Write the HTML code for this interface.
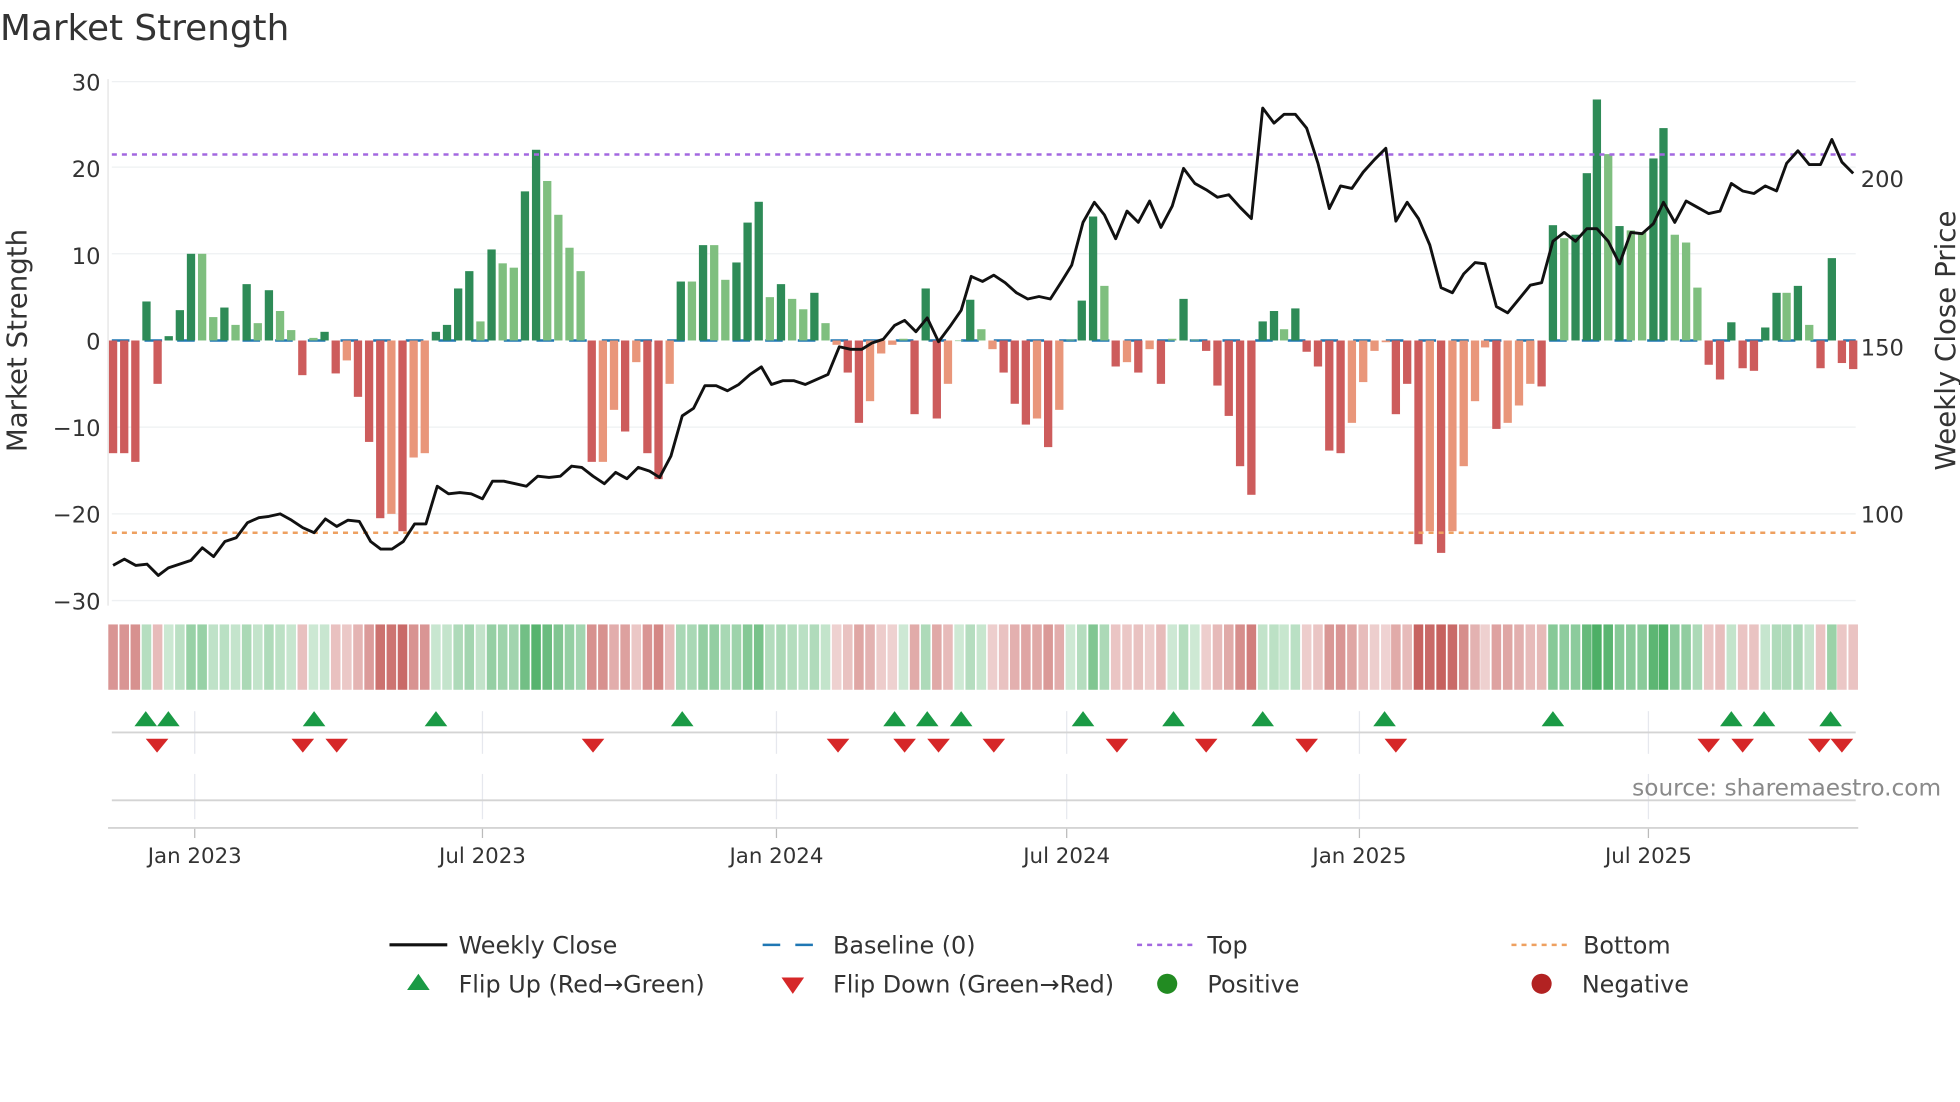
<!DOCTYPE html>
<html><head><meta charset="utf-8"><style>
html,body{margin:0;padding:0;background:#fff;width:1960px;height:1102px;overflow:hidden}
svg{display:block;font-family:"DejaVu Sans","Liberation Sans",sans-serif}
</style></head><body>
<svg id="s" width="1960" height="1102" viewBox="0 0 1560 877.1" xmlns="http://www.w3.org/2000/svg">
<text x="0" y="32" font-size="28.5" fill="#333">Market Strength</text>
<g id="grid" stroke="#eef0f2" stroke-width="1"></g>
<line x1="86" y1="63" x2="86" y2="482" stroke="#e3e3e3"/>
<g font-size="18" fill="#333" text-anchor="end">
<text x="80" y="72">30</text><text x="80" y="141">20</text><text x="80" y="210">10</text><text x="80" y="278">0</text>
<text x="80" y="347">−10</text><text x="80" y="416">−20</text><text x="80" y="485">−30</text>
</g>
<g font-size="18" fill="#333"><text x="1481" y="149">200</text><text x="1481" y="283">150</text><text x="1481" y="416">100</text></g>
<text transform="translate(21,271) rotate(-90)" font-size="22" fill="#333" text-anchor="middle">Market Strength</text>
<text transform="translate(1556,271) rotate(-90)" font-size="22" fill="#333" text-anchor="middle">Weekly Close Price</text>
<line x1="89" y1="271" x2="1477" y2="271" stroke="#1f77b4" stroke-width="2" stroke-dasharray="14 12"/>
<g id="bars"></g>
<line x1="89" y1="123" x2="1477" y2="123" stroke="#a368e0" stroke-width="2" stroke-dasharray="4 4"/>
<line x1="89" y1="424" x2="1477" y2="424" stroke="#eea060" stroke-width="2" stroke-dasharray="4 4"/>
<polyline id="price" fill="none" stroke="#111" stroke-width="2.3" stroke-linejoin="round"/>
<g id="strip"></g>
<g id="lower" stroke="#e6e8ee"></g>
<line x1="89" y1="583" x2="1477" y2="583" stroke="#d4d4d4" stroke-width="1.5"/>
<line x1="89" y1="637" x2="1477" y2="637" stroke="#d4d4d4" stroke-width="1.5"/>
<line x1="86" y1="659" x2="1479" y2="659" stroke="#d4d4d4" stroke-width="1.5"/>
<g id="marks"></g>
<text x="1545" y="633" font-size="18.5" fill="#8a8a8a" text-anchor="end">source: sharemaestro.com</text>
<g font-size="17" fill="#333" text-anchor="middle">
<text x="155" y="687">Jan 2023</text><text x="384" y="687">Jul 2023</text><text x="618" y="687">Jan 2024</text>
<text x="849" y="687">Jul 2024</text><text x="1082" y="687">Jan 2025</text><text x="1312" y="687">Jul 2025</text>
</g>
<g font-size="19" fill="#333">
<line x1="310" y1="752" x2="356" y2="752" stroke="#111" stroke-width="2.5"/><text x="365" y="759">Weekly Close</text>
<line x1="607" y1="752" x2="653" y2="752" stroke="#1f77b4" stroke-width="2" stroke-dasharray="14 12"/><text x="663" y="759">Baseline (0)</text>
<line x1="905" y1="752" x2="950" y2="752" stroke="#a368e0" stroke-width="2" stroke-dasharray="4 4"/><text x="961" y="759">Top</text>
<line x1="1203" y1="752" x2="1248" y2="752" stroke="#eea060" stroke-width="2" stroke-dasharray="4 4"/><text x="1260" y="759">Bottom</text>
<path d="M324 788 L333 775 L342 788Z" fill="#1a9a45"/><text x="365" y="790">Flip Up (Red→Green)</text>
<path d="M622 778 L631 791 L640 778Z" fill="#d62728"/><text x="663" y="790">Flip Down (Green→Red)</text>
<circle cx="929" cy="783" r="8" fill="#228b22"/><text x="961" y="790">Positive</text>
<circle cx="1227" cy="783" r="8" fill="#b22222"/><text x="1259" y="790">Negative</text>
</g>
</svg>
<script>
var NS="http://www.w3.org/2000/svg";
function el(p,t,a){var e=document.createElementNS(NS,t);for(var k in a)e.setAttribute(k,a[k]);p.appendChild(e);return e;}
var g=document.getElementById('grid');
[65,133,202,340,409,478].forEach(function(y){el(g,'line',{x1:89,x2:1477,y1:y,y2:y});});
var first=[[-13,'R'],[-13,'R'],[-14,'R'],[4.5,'G'],[-5,'R'],[.5,'G'],[3.5,'G'],[10,'G'],[10,'g'],[2.7,'g'],[3.8,'G'],[1.8,'g'],[6.5,'G'],[2,'g'],[5.8,'G'],[3.4,'g'],[1.2,'g'],[-4,'R'],[.3,'g'],[1,'G'],[-3.8,'R'],[-2.3,'r'],[-6.5,'R'],[-11.7,'R'],[-20.5,'R'],[-20,'r'],[-22,'R'],[-13.5,'r'],[-13,'r'],[1,'G'],[1.8,'G'],[6,'G'],[8,'G'],[2.2,'g'],[10.5,'G'],[8.9,'g'],[8.4,'g'],[17.2,'G'],[22,'G'],[18.4,'g'],[14.5,'g'],[10.7,'g'],[8,'g'],
[-14,'R'],[-14,'r'],[-8,'r'],[-10.5,'R'],[-2.5,'r'],[-13,'R'],[-16,'R'],[-5,'r'],[6.8,'G'],[6.8,'g'],[11,'G'],[11,'g'],[7,'g'],[9,'G'],[13.6,'G'],[16,'G'],[5,'g'],[6.5,'G'],[4.8,'g'],[3.6,'g'],[5.5,'G'],[2,'g'],[-.5,'r'],[-3.7,'R'],[-9.5,'R'],[-7,'r'],[-1.5,'r'],[-.5,'r'],[.2,'g'],[-8.5,'R'],[6,'G'],[-9,'R'],[-5,'r'],[0,'g'],[4.7,'G'],[1.3,'g'],[-1,'r'],[-3.7,'R'],[-7.3,'R'],[-9.7,'R'],[-9,'r'],[-12.3,'R'],[-8,'r'],[0.1,'g']];
var data=[];first.forEach(function(d,i){data.push([90+8.86*i,d[0],d[1]]);});
[[861,4.6,'G'],[870,14.3,'G'],[879,6.3,'g'],[888,-3,'R'],[897,-2.5,'r'],[906,-3.7,'R'],[915,-1,'r'],[924,-5,'R'],[933,.2,'g'],[942,4.8,'G'],[951,.1,'g'],[960,-1.2,'R'],[969,-5.2,'R'],[978,-8.7,'R'],[987,-14.5,'R'],[996,-17.8,'R'],[1005,2.2,'G'],[1014,3.4,'G'],[1022,1.3,'g'],[1031,3.7,'G'],[1040,-1.3,'R'],[1049,-3,'R'],[1058,-12.7,'R'],[1067,-13,'R'],[1076,-9.5,'r'],[1085,-4.8,'r'],[1094,-1.2,'r'],[1103,-.2,'r'],[1111,-8.5,'R'],[1120,-5,'R'],[1129,-23.5,'R'],[1138,-22,'r'],[1147,-24.5,'R'],[1156,-22,'r'],[1165,-14.5,'r'],[1174,-7,'r'],[1182,-.8,'r'],[1191,-10.2,'R'],[1200,-9.5,'r'],[1209,-7.5,'r'],[1218,-5,'r'],[1227,-5.3,'R'],[1236,13.3,'G'],[1245,11.8,'g'],[1254,12.2,'G'],[1263,19.3,'G'],[1271,27.8,'G'],[1280,21.5,'g'],[1289,13.2,'G'],[1298,12.7,'g'],[1307,12.5,'g'],[1316,21,'G'],[1324,24.5,'G'],[1333,12.2,'g'],[1342,11.3,'g'],[1351,6.1,'g'],[1360,-2.8,'R'],[1369,-4.5,'R'],[1378,2.1,'G'],[1387,-3.2,'R'],[1396,-3.5,'R'],[1405,1.5,'G'],[1414,5.5,'G'],[1422,5.5,'g'],[1431,6.3,'G'],[1440,1.8,'g'],[1449,-3.2,'R'],[1458,9.5,'G'],[1466,-2.6,'R'],[1475,-3.3,'R']].forEach(function(d){data.push(d);});
var col={G:'#2e8b57',g:'#7fbf7f',R:'#cd5c5c',r:'#e9967a'};
var b=document.getElementById('bars'),st=document.getElementById('strip');
data.forEach(function(d){var h=Math.abs(d[1])*6.9,y=d[1]>=0?271-h:271;
el(b,'rect',{x:d[0]-3.3,y:y,width:6.6,height:Math.max(h,0.5),fill:col[d[2]]});
var a=Math.min(0.25+Math.abs(d[1])/22*0.6,0.9);
el(st,'rect',{x:d[0]-3.8,y:497,width:7.6,height:52,fill:d[1]>=0?'#3aa655':'#c0504d','fill-opacity':a});});
var pts=[[90,450],[99,445],[108,450],[117,449],[126,458],[134,452],[143,449],[152,446],[161,436],[170,443],[179,431],[188,428],[197,416],[206,412],[214,411],[223,409],[232,414],[241,420],[250,424],[259,413],[268,419],[277,414],[286,415],[295,431],[303,437],[312,437],[321,431],[330,417],[339,417],[348,387],[357,393],[366,392],[375,393],[384,397],[392,383],[401,383],[410,385],[419,387],[428,379],[437,380],[446,379],[455,371],[463,372],[472,379],[481,385],[490,376],[499,381],[508,372],[517,375],[525,380],[534,363],[543,331],[552,325],[561,307],[570,307],[579,311],[588,306],[597,298],[606,292],[614,306],[623,303],[632,303],[641,306],[650,302],[659,298],[668,276],[677,278],[686,278],[694,273],[703,270],[712,259],[720,255],[729,264],[738,253],[747,272],[756,260],[765,247],[773,220],[782,224],[791,219],[800,225],[809,233],[818,238],[827,236],[836,238],[845,224],[853,211],[862,177],[871,161],[879,171],[888,190],[897,168],[906,177],[915,160],[924,181],[933,164],[942,134],[951,146],[960,151],[969,157],[978,155],[987,165],[996,174],[1005,86],[1014,98],[1022,91],[1031,91],[1040,102],[1049,130],[1058,166],[1067,148],[1076,150],[1085,137],[1094,127],[1103,118],[1111,176],[1120,161],[1129,174],[1138,195],[1147,229],[1156,233],[1165,218],[1174,209],[1182,210],[1191,244],[1200,249],[1209,238],[1218,227],[1227,225],[1236,192],[1245,185],[1254,192],[1263,182],[1271,182],[1280,192],[1289,210],[1298,185],[1307,186],[1316,178],[1324,161],[1333,177],[1342,160],[1351,165],[1360,170],[1369,168],[1378,146],[1387,152],[1396,154],[1405,148],[1414,152],[1422,130],[1431,120],[1440,131],[1449,131],[1458,111],[1466,129],[1475,138]];
document.getElementById('price').setAttribute('points',pts.map(function(p){return p.join(',');}).join(' '));
var lo=document.getElementById('lower');
[155,384,618,849,1082,1312].forEach(function(x){el(lo,'line',{x1:x,x2:x,y1:566,y2:600});el(lo,'line',{x1:x,x2:x,y1:616,y2:652});el(lo,'line',{x1:x,x2:x,y1:659,y2:667,stroke:'#bbb'});});
var m=document.getElementById('marks');
[116,134,250,347,543,712,738,765,862,934,1005,1102,1236,1378,1404,1457].forEach(function(x){el(m,'path',{d:'M'+(x-9)+' 578 L'+x+' 566 L'+(x+9)+' 578Z',fill:'#1a9a45'});});
[125,241,268,472,667,720,747,791,889,960,1040,1111,1360,1387,1448,1466].forEach(function(x){el(m,'path',{d:'M'+(x-9)+' 588 L'+x+' 599 L'+(x+9)+' 588Z',fill:'#d62728'});});
</script>
</body></html>
